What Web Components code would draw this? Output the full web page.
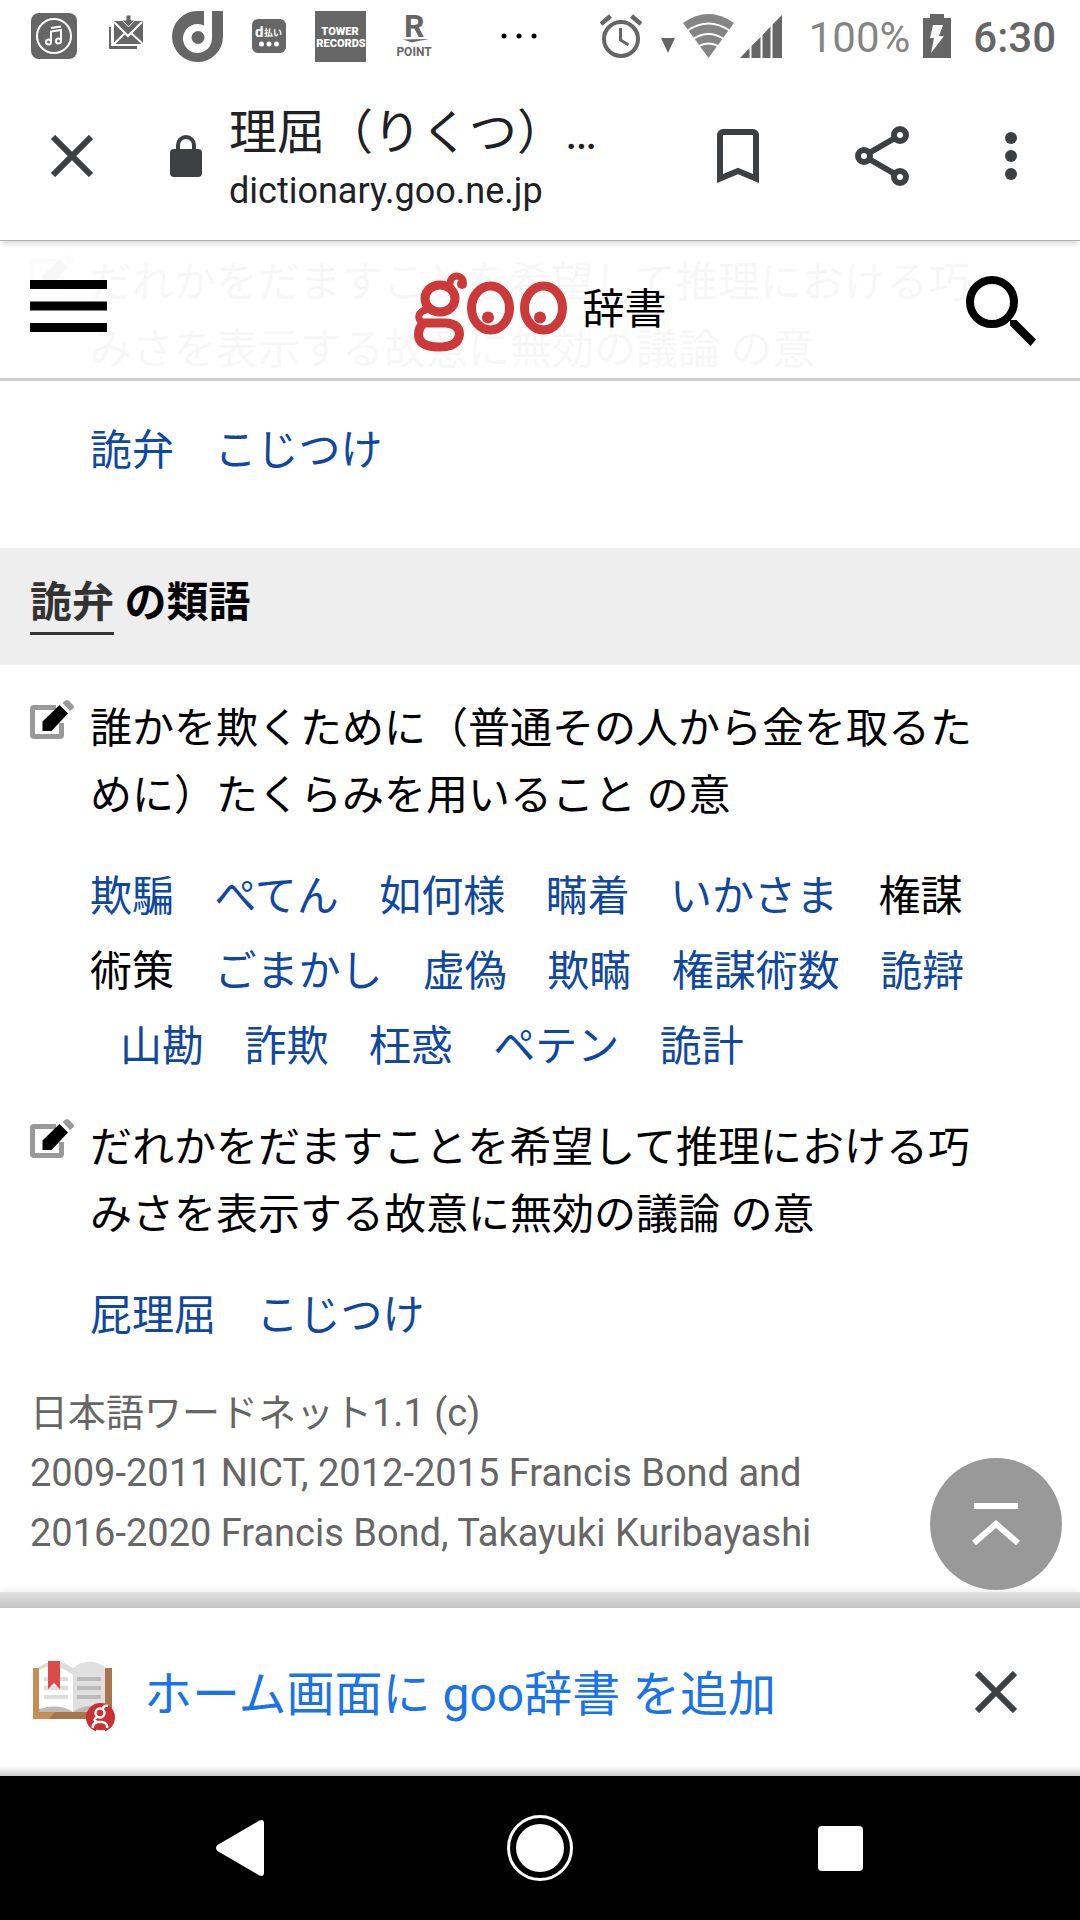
<!DOCTYPE html>
<html lang="ja">
<head>
<meta charset="utf-8">
<meta name="viewport" content="width=device-width, initial-scale=1">
<title>理屈（りくつ）の類語 - goo辞書</title>
<style>
  html, body { margin: 0; }
  body {
    background: #fff;
    color: #000;
    font-family: Roboto, 'Noto Sans CJK JP', sans-serif;
    font-size: 42px;
  }
</style>
</head>
<body>
<phone-screen>
  <status-bar slot="top"></status-bar>
  <browser-bar slot="top" page-title="理屈（りくつ）…" host="dictionary.goo.ne.jp"></browser-bar>

  <goo-header slot="header"></goo-header>

  <word-entry words="詭弁,こじつけ">だれかをだますことを希望して推理における巧みさを表示する故意に無効の議論 の意</word-entry>
  <section-title word="詭弁">の類語</section-title>
  <word-entry words="欺騙,ぺてん,如何様,瞞着,いかさま,*権謀|術策,ごまかし,虚偽,欺瞞,権謀術数,詭辯,山勘,詐欺,枉惑,ペテン,詭計">誰かを欺くために（普通その人から金を取るために）たくらみを用いること の意</word-entry>
  <word-entry words="屁理屈,こじつけ">だれかをだますことを希望して推理における巧みさを表示する故意に無効の議論 の意</word-entry>
  <copy-right>日本語ワードネット1.1 (c)<br>2009-2011 NICT, 2012-2015 Francis Bond and<br>2016-2020 Francis Bond, Takayuki Kuribayashi</copy-right>

  <page-top slot="float"></page-top>
  <install-banner slot="bottom">ホーム画面に goo辞書 を追加</install-banner>
  <nav-bar slot="bottom"></nav-bar>
</phone-screen>

<script>
const BUTTON_RESET = `
  button {
    display: flex;
    align-items: center;
    justify-content: center;
    margin: 0;
    padding: 0;
    border: 0;
    background: none;
    color: inherit;
    font: inherit;
    cursor: pointer;
  }
  svg { display: block; flex: none; }
`;

// 共通：shadow root を作って html を流し込む
class BaseElement extends HTMLElement {
  constructor() {
    super();
    this.attachShadow({ mode: 'open' });
  }

  connectedCallback() {
    this.shadowRoot.innerHTML = this.render();
  }
}

/* 画面全体の枠 */
class PhoneScreen extends BaseElement {
  render() {
    return `
      <style>
        :host { display: flex; flex-direction: column; min-height: 100vh; }
        .view { position: relative; flex: 1; overflow: hidden; }
        .header { position: absolute; top: 0; left: 0; right: 0; z-index: 1; }
        .content { padding: 8px 0 30px; }
        .float { position: absolute; right: 18px; bottom: 18px; z-index: 3; }
        .edge {
          position: absolute;
          left: 0;
          right: 0;
          bottom: 0;
          height: 16px;
          background: linear-gradient(#e2e2e2, #c3c3c3);
          box-shadow: 0 -2px 8px rgba(0, 0, 0, 0.08);
          z-index: 2;
        }
      </style>
      <slot name="top"></slot>
      <div class="view">
        <div class="header"><slot name="header"></slot></div>
        <main class="content"><slot></slot></main>
        <div class="float"><slot name="float"></slot></div>
        <div class="edge"></div>
      </div>
      <slot name="bottom"></slot>
    `;
  }
}

/* Android ステータスバー */
class StatusBar extends BaseElement {
  render() {
    return `
      <style>
        :host {
          display: flex;
          align-items: center;
          justify-content: space-between;
          height: 72px;
          padding: 0 24px 0 31px;
          box-sizing: border-box;
          color: #666;
        }
        svg { display: block; fill: #666; }
        .left, .right { display: flex; align-items: center; }
        .left { gap: 29px; }
        .right { line-height: 48px; }
        .alarm { margin-right: 19px; }
        .data { margin: 18px 8px 0 0; }
        .signal { margin: 0 27px 0 6px; }
        .percent, .time { padding-top: 4px; }
        .percent { color: #858585; }
        .battery { margin: 0 22px 0 13px; }
        .time { font-weight: 500; }
        .more { margin-left: 39px; }
        .mail { margin-left: 3px; }
      </style>
      <div class="left">
        <svg width="46" height="46" viewBox="0 0 46 46">
          <rect width="46" height="46" rx="8"/>
          <circle cx="23" cy="23" r="17" fill="none" stroke="#fff" stroke-width="2"/>
          <path d="M20 29V18.500l10-1.500v11M20 15l10-1.500" fill="none" stroke="#fff" stroke-width="2"/>
          <circle cx="17.500" cy="29" r="2.500" fill="none" stroke="#fff" stroke-width="2"/>
          <circle cx="27.500" cy="28" r="2.500" fill="none" stroke="#fff" stroke-width="2"/>
        </svg>
        <svg class="mail" width="34" height="42" viewBox="0 0 34 42">
          <path d="M0 12h2v19h26v3H1a1 1 0 0 1-1-1z"/>
          <path d="M5 6h28a1 1 0 0 1 1 1v22H5z"/>
          <path d="M5 7l14 14L33 7M5 29l11-11M34 29L22 18" fill="none" stroke="#fff" stroke-width="2"/>
          <path d="M17 0h5v5h4l-6.500 7L13 5h4z" stroke="#fff" stroke-width="1"/>
        </svg>
        <svg width="51" height="51" viewBox="0 0 51 51">
          <path d="M25 0h7v14.500a14.500 14.500 0 1 0 8 12.500V0h11v26a25.500 25.500 0 1 1-26-26z"/>
          <circle cx="26" cy="26.500" r="6.500"/>
        </svg>
        <svg width="34" height="34" viewBox="0 0 34 34">
          <rect width="34" height="34" rx="6"/>
          <text x="3" y="18" fill="#fff" font-size="15" font-weight="700">d</text>
          <text x="12" y="17" fill="#fff" font-size="9" font-weight="700">払い</text>
          <circle cx="9.500" cy="25" r="2.500" fill="#fff"/><circle cx="17" cy="25" r="2.500" fill="#fff"/><circle cx="24.500" cy="25" r="2.500" fill="#fff"/>
        </svg>
        <svg width="51" height="51" viewBox="0 0 51 51">
          <rect width="51" height="51"/>
          <g fill="#fff" font-weight="900" font-size="11" text-anchor="middle">
            <text x="25" y="24">TOWER</text>
            <text x="26" y="36">RECORDS</text>
          </g>
        </svg>
        <svg width="38" height="60" viewBox="0 -8 38 60">
          <text x="9" y="23" font-size="32" font-weight="700">R</text>
          <path d="M8 25.500l26-.5c-7 1.500-12 2-17 3.500z"/>
          <text x="19" y="42" font-size="12" font-weight="700" text-anchor="middle">POINT</text>
        </svg>
        <svg class="more" width="36" height="6" viewBox="0 0 36 6">
          <g fill="#000"><circle cx="3" cy="3" r="2.500"/><circle cx="18" cy="3" r="2.500"/><circle cx="33" cy="3" r="2.500"/></g>
        </svg>
      </div>
      <div class="right">
        <svg class="alarm" width="42" height="44" viewBox="0 0 42 44">
          <circle cx="21" cy="25" r="17" fill="none" stroke="#666" stroke-width="4"/>
          <path d="M20.500 14v12l8 5" fill="none" stroke="#666" stroke-width="3"/>
          <path d="M1 10l9.500-8M41 10l-9.500-8" stroke="#666" stroke-width="4.500"/>
        </svg>
        <svg class="data" width="14" height="15" viewBox="0 0 14 15"><path d="M0 0h14L7 15z"/></svg>
        <svg width="51" height="44" viewBox="0 0 51 44">
          <path d="M0 9Q25.500-9 51 9L25.500 44z" fill="#858585"/>
          <path d="M4 17q21.500-15 43 0M10 25q15.500-10 31 0M15 32.500q10.500-6 21 0" fill="none" stroke="#fff" stroke-width="2"/>
        </svg>
        <svg class="signal" width="42" height="43" viewBox="0 0 42 43">
          <path d="M0 43L9.500 33v10zM11.500 31L20.500 22v21h-9zM22.500 20L30.500 11.500V43h-8zM32.500 9.500L42 0v43h-9.500z"/>
        </svg>
        <span class="percent">100%</span>
        <svg class="battery" width="28" height="44" viewBox="0 0 28 44">
          <path d="M7 0h14v4h7v40H0V4h7z"/>
          <path d="M10 11h10l-4 11h5L8 39l3-15H7z" fill="#fff"/>
        </svg>
        <time class="time">6:30</time>
      </div>
    `;
  }
}

/* ブラウザのツールバー */
class BrowserBar extends BaseElement {
  render() {
    return `
      <style>
        ${BUTTON_RESET}
        :host {
          display: flex;
          align-items: center;
          height: 169px;
          padding: 0 36px 0 27px;
          box-sizing: border-box;
          border-bottom: 1px solid #b0b0b0;
          box-shadow: 0 5px 5px -2px rgba(0, 0, 0, 0.14);
          color: #3c4043;
          position: relative;
          z-index: 5;
        }
        button { width: 96px; height: 96px; }
        .close { width: 90px; }
        .lock { margin-left: 53px; }
        .page { flex: 1; min-width: 0; margin-left: 27px; padding-top: 10px; color: #202124; }
        .title, .host { white-space: nowrap; overflow: hidden; text-overflow: ellipsis; }
        .title { font-size: 48px; line-height: 60px; }
        .host { font-size: 36px; line-height: 56px; }
        .actions { display: flex; gap: 48px; }
        .more { width: 66px; }
      </style>
      <button class="close" aria-label="閉じる">
        <svg width="42" height="42" viewBox="0 0 42 42"><path d="M2 2l38 38M40 2L2 40" stroke="currentColor" stroke-width="6"/></svg>
      </button>
      <svg class="lock" width="32" height="42" viewBox="0 0 32 42">
        <path d="M8 16V10a8 8 0 0 1 16 0v6" fill="none" stroke="currentColor" stroke-width="4"/>
        <rect y="14" width="32" height="28" rx="4" fill="currentColor"/>
      </svg>
      <div class="page">
        <div class="title">${this.getAttribute('page-title')}</div>
        <div class="host">${this.getAttribute('host')}</div>
      </div>
      <div class="actions">
        <button aria-label="ブックマーク">
          <svg width="42" height="54" viewBox="0 0 42 54"><path d="M3 49.500V6a3 3 0 0 1 3-3h30a3 3 0 0 1 3 3v43.500L21 42z" fill="none" stroke="currentColor" stroke-width="6"/></svg>
        </button>
        <button aria-label="共有">
          <svg width="54" height="60" viewBox="0 0 54 60" fill="none" stroke="currentColor" stroke-width="6">
            <circle cx="45" cy="9" r="6"/><circle cx="9" cy="30" r="6"/><circle cx="45" cy="51" r="6"/>
            <path d="M14 27l26-15M14 33l26 15"/>
          </svg>
        </button>
        <button class="more" aria-label="メニュー">
          <svg width="12" height="48" viewBox="0 0 12 48" fill="currentColor"><circle cx="6" cy="6" r="6"/><circle cx="6" cy="24" r="6"/><circle cx="6" cy="42" r="6"/></svg>
        </button>
      </div>
    `;
  }
}

/* サイトヘッダー：本文の上に半透明で重なる */
class GooHeader extends BaseElement {
  render() {
    return `
      <style>
        ${BUTTON_RESET}
        :host {
          display: grid;
          grid-template-columns: 1fr auto 1fr;
          align-items: center;
          height: 140px;
          padding: 0 30px;
          box-sizing: border-box;
          background: rgba(255, 255, 255, 0.97);
          border-bottom: 3px solid #ccc;
        }
        button { height: 100px; box-sizing: border-box; }
        .search { justify-self: end; padding: 2px 13px 0 0; }
        .menu { justify-self: start; padding-bottom: 8px; }
        a { display: flex; align-items: center; gap: 15px; padding-top: 4px; color: #000; text-decoration: none; }
        span { padding-bottom: 12px; }
      </style>
      <button class="menu" aria-label="メニュー">
        <svg width="77" height="52" viewBox="0 0 77 52"><path d="M0 0h77v9H0zM0 21.500h77v9H0zM0 43h77v9H0z"/></svg>
      </button>
      <a href="#" aria-label="goo辞書">
        <svg width="154" height="80" viewBox="413 272 154 80" fill="none" stroke="#cd3838" stroke-width="9">
          <ellipse cx="440" cy="298.500" rx="15" ry="13.500"/>
          <path d="M450 287C449 277 455 275 459 276.500C465 279 463 283 461.500 286" stroke-width="7"/>
          <circle cx="462" cy="284" r="5" fill="#cd3838" stroke="none"/>
          <path d="M428 309C417 312 416 319 424 323.500" stroke-width="7"/>
          <path d="M424 323H446Q459.500 324 459.500 334.500Q458 347 439 347Q419 347 418.500 335Q418.500 327 424 323z"/>
          <ellipse cx="490.500" cy="308" rx="19" ry="22"/>
          <ellipse cx="543.500" cy="308" rx="19" ry="22"/>
          <g fill="#cd3838" stroke="none"><circle cx="488" cy="317.500" r="6"/><circle cx="540" cy="317.500" r="6"/></g>
        </svg>
        <span>辞書</span>
      </a>
      <button class="search" aria-label="検索">
        <svg width="71" height="70" viewBox="0 0 71 70">
          <circle cx="26" cy="26" r="22" fill="none" stroke="#000" stroke-width="8"/>
          <path d="M44 44h6.500L70 63.500 64.500 70 44 49.500z"/>
        </svg>
      </button>
    `;
  }
}

/* 類語の見出し */
class SectionTitle extends BaseElement {
  render() {
    return `
      <style>
        :host { display: block; margin-bottom: 30px; padding: 24px 30px 30px; background: #eee; }
        h2 { margin: 0; font-size: 42px; line-height: 61px; font-weight: 700; }
        a { display: inline-block; color: #333; text-decoration: none; border-bottom: 3px solid #333; line-height: 58px; }
      </style>
      <h2><a href="#">${this.getAttribute('word')}</a> <slot></slot></h2>
    `;
  }
}

/* 意味と類語リンク。先頭に * が付く語はリンクなし、| は改行できる位置 */
class WordEntry extends BaseElement {
  words() {
    return this.getAttribute('words').split(',').map((w) => (
      w.startsWith('*') ? w.slice(1).replace('|', '<wbr>') : `<a href="#">${w}</a>`
    )).join(' <i></i>');
  }

  render() {
    return `
      <style>
        :host { display: grid; grid-template-columns: 60px 1fr; padding: 0 92px 30px 30px; }
        :host(:first-of-type) { padding-bottom: 60px; }
        svg { display: block; margin-top: 5px; }
        p { margin: 0; line-height: 67px; }
        .words { margin-top: 30px; line-height: 75px; }
        a { color: #1048a0; text-decoration: none; }
        i { display: inline-block; width: 30px; }
      </style>
      <svg width="44" height="40" viewBox="30 699 44 40">
        <path d="M56 706.500H34a1.500 1.500 0 0 0-1.500 1.500v26a1.500 1.500 0 0 0 1.500 1.500h26a1.500 1.500 0 0 0 1.500-1.500V722" fill="none" stroke="#999" stroke-width="5"/>
        <path d="M42.500 730v-9.500L59.500 704l8.500 8.500L51.500 730z"/>
        <path d="M62.500 702l3-2.500q1.500-1 3 0l5 5q1 1.500 0 2.500l-3.500 3z" fill="#999"/>
      </svg>
      <div>
        <p><slot></slot></p>
        <p class="words">${this.words()}</p>
      </div>
    `;
  }
}

class CopyRight extends BaseElement {
  render() {
    return `
      <style>
        :host { display: block; padding: 0 30px; color: #666; font-size: 38px; line-height: 60px; }
      </style>
      <slot></slot>
    `;
  }
}

/* ページ先頭へ戻るボタン */
class PageTop extends BaseElement {
  render() {
    return `
      <style>
        ${BUTTON_RESET}
        :host { display: block; }
        button { width: 132px; height: 132px; border-radius: 50%; background: #999; }
      </style>
      <button aria-label="ページの先頭へ">
        <svg width="48" height="42" viewBox="0 0 48 42" fill="none" stroke="#fff" stroke-width="6"><path d="M2 3h44M2 40l22-19 22 19"/></svg>
      </button>
    `;
  }
}

/* ホーム画面への追加バナー */
class InstallBanner extends BaseElement {
  render() {
    return `
      <style>
        ${BUTTON_RESET}
        :host {
          display: flex;
          align-items: center;
          height: 168px;
          padding: 0 39px 0 32px;
          box-sizing: border-box;
          background: linear-gradient(to top, #ccc, #fff 10px);
        }
        .book { margin-top: 7px; }
        .add { margin-left: 28px; padding-top: 6px; color: #1a73e8; font-size: 48px; line-height: 72px; }
        .close { width: 90px; height: 90px; margin-left: auto; color: #3c4043; }
      </style>
      <svg class="book" width="84" height="72" viewBox="32 1660 84 72">
        <path d="M33 1668h39v51H33z" fill="#c68e54"/>
        <path d="M56 1711h56v8H49z" fill="#a8764a"/>
        <path d="M104 1668h8v51h-8z" fill="#a8764a"/>
        <path d="M39 1667q16-9 34 0v45H39z" fill="#fff"/>
        <path d="M39 1667q17-12 34 1v7q-17-14-34-5z" fill="#ddd"/>
        <path d="M73 1668q16-12 32-1v45H73z" fill="#e0e0e0"/>
        <path d="M39 1709q20-6 34 3H39zM73 1712q14-10 32-3v3z" fill="#bbb"/>
        <path d="M44 1677h24v4H44zM44 1686h24v4H44zM44 1695h24v4H44z" fill="#ddd"/>
        <path d="M77 1677h24v4H77zM77 1686h24v4H77zM77 1695h24v4H77z" fill="#bbb"/>
        <path d="M48 1661h12v28l-6-6-6 6z" fill="#dc4b4b"/>
        <circle cx="100.500" cy="1717.500" r="14.500" fill="#c93030"/>
        <g fill="none" stroke="#fff" stroke-width="2.500">
          <circle cx="100" cy="1713" r="4.500"/>
          <path d="M103 1709q0-4 5-3M97 1717q-5 3 0 5h5q6 1 5 6M97 1722q-5 2-4 6M96 1731q5 1 9 0"/>
        </g>
      </svg>
      <button class="add"><slot></slot></button>
      <button class="close" aria-label="閉じる">
        <svg width="42" height="42" viewBox="0 0 42 42"><path d="M2 2l38 38M40 2L2 40" stroke="currentColor" stroke-width="6"/></svg>
      </button>
    `;
  }
}

/* Android ナビゲーションバー */
class NavBar extends BaseElement {
  render() {
    return `
      <style>
        ${BUTTON_RESET}
        :host {
          display: grid;
          grid-template-columns: repeat(3, 1fr);
          height: 144px;
          padding: 0 90px;
          background: #000;
          color: #fff;
        }
      </style>
      <button aria-label="戻る">
        <svg width="48" height="56" viewBox="0 0 48 56" fill="currentColor"><path d="M1.500 25L43 .8q5-2.200 5 2.700v49q0 4.900-5 2.700L1.500 31q-3-3 0-6z"/></svg>
      </button>
      <button aria-label="ホーム">
        <svg width="66" height="66" viewBox="0 0 66 66"><circle cx="33" cy="33" r="31.500" fill="none" stroke="currentColor" stroke-width="3"/><circle cx="33" cy="33" r="24" fill="currentColor"/></svg>
      </button>
      <button aria-label="アプリ履歴">
        <svg width="45" height="45" viewBox="0 0 45 45"><rect width="45" height="45" rx="4" fill="currentColor"/></svg>
      </button>
    `;
  }
}

customElements.define('phone-screen', PhoneScreen);
customElements.define('status-bar', StatusBar);
customElements.define('browser-bar', BrowserBar);
customElements.define('goo-header', GooHeader);
customElements.define('section-title', SectionTitle);
customElements.define('word-entry', WordEntry);
customElements.define('copy-right', CopyRight);
customElements.define('page-top', PageTop);
customElements.define('install-banner', InstallBanner);
customElements.define('nav-bar', NavBar);
</script>
</body>
</html>
